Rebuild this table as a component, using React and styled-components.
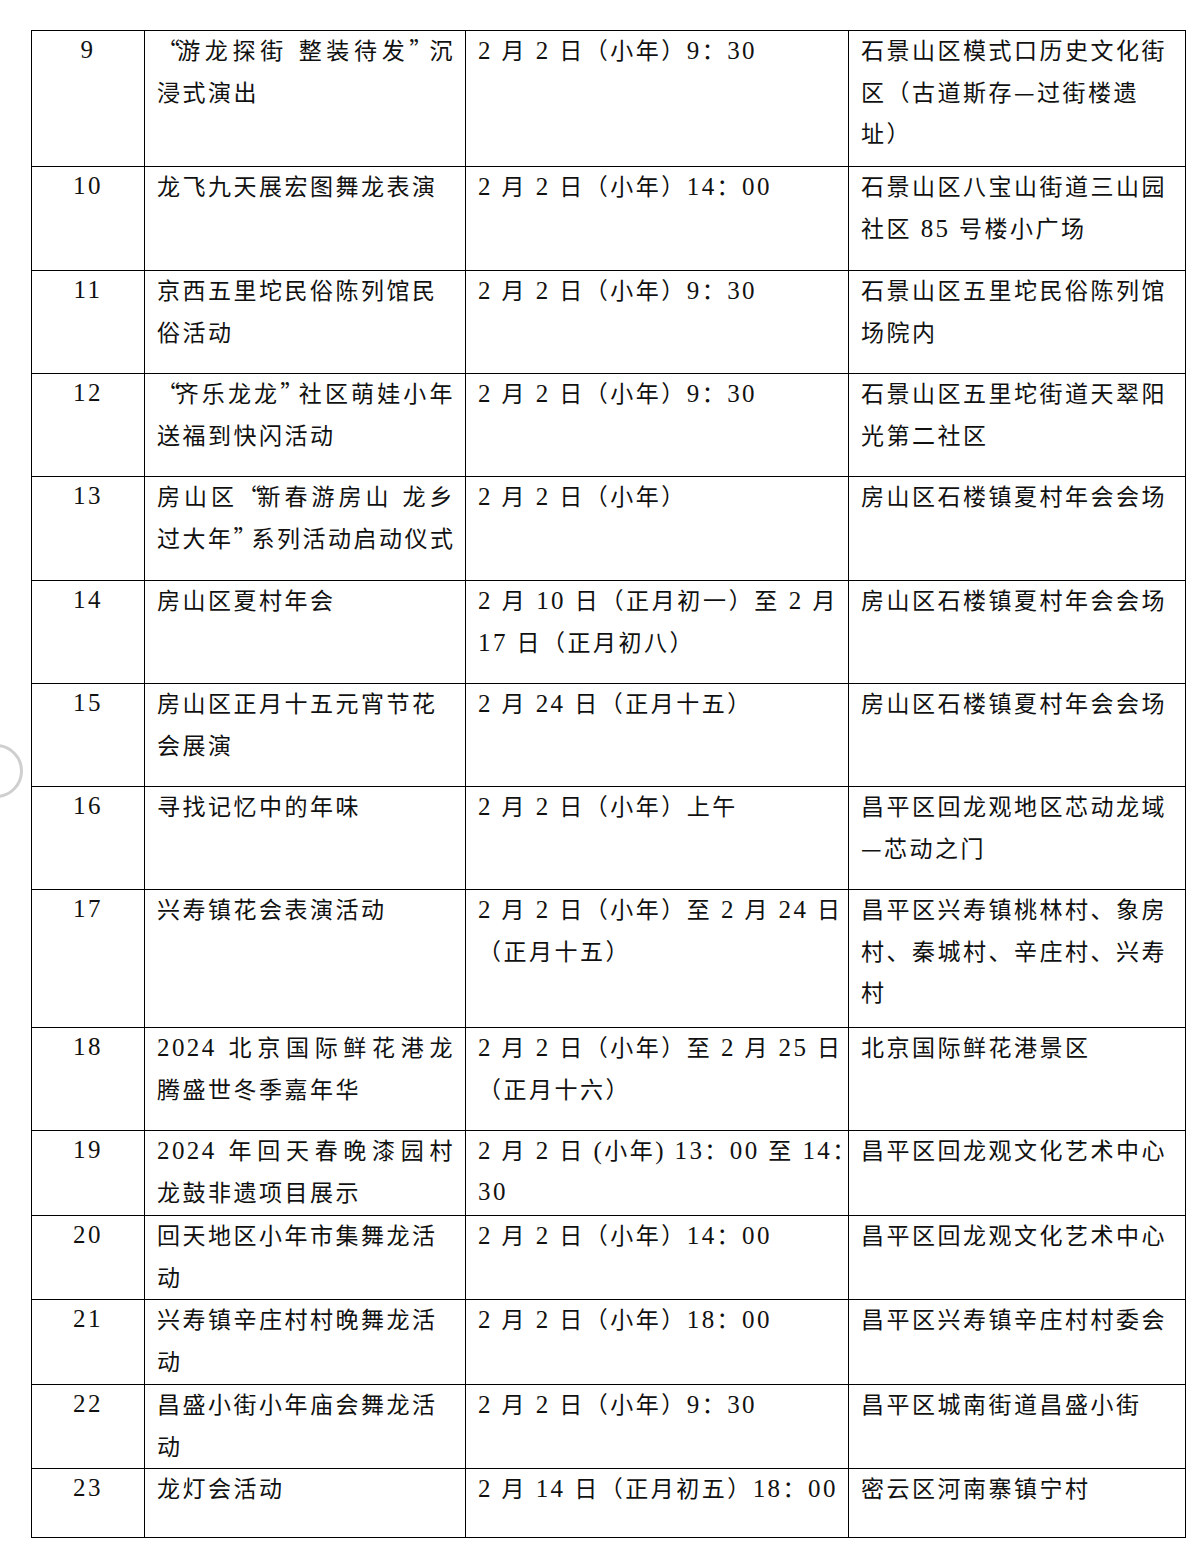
import styled, { createGlobalStyle } from "styled-components";

const GlobalStyle = createGlobalStyle`
  html, body {
    margin: 0;
    padding: 0;
    background: #ffffff;
  }
  body {
    font-family: "Liberation Serif", "Noto Sans CJK SC", serif;
    color: #111;
  }
`;

// each cell is a list of lines; a leading "|" marks a line spread to the full width
const rows = [
  { no: 9, h: 136, name: ["|“游龙探街 整装待发”沉", "浸式演出"], time: ["2 月 2 日（小年）9：30"], place: ["石景山区模式口历史文化街", "区（古道斯存—过街楼遗", "址）"] },
  { no: 10, h: 104, name: ["龙飞九天展宏图舞龙表演"], time: ["2 月 2 日（小年）14：00"], place: ["石景山区八宝山街道三山园", "社区 85 号楼小广场"] },
  { no: 11, h: 103, name: ["京西五里坨民俗陈列馆民", "俗活动"], time: ["2 月 2 日（小年）9：30"], place: ["石景山区五里坨民俗陈列馆", "场院内"] },
  { no: 12, h: 103, name: ["|“齐乐龙龙”社区萌娃小年", "送福到快闪活动"], time: ["2 月 2 日（小年）9：30"], place: ["石景山区五里坨街道天翠阳", "光第二社区"] },
  { no: 13, h: 104, name: ["|房山区“新春游房山 龙乡", "过大年”系列活动启动仪式"], time: ["2 月 2 日（小年）"], place: ["房山区石楼镇夏村年会会场"] },
  { no: 14, h: 103, name: ["房山区夏村年会"], time: ["|2 月 10 日（正月初一）至 2 月", "17 日（正月初八）"], place: ["房山区石楼镇夏村年会会场"] },
  { no: 15, h: 103, name: ["房山区正月十五元宵节花", "会展演"], time: ["2 月 24 日（正月十五）"], place: ["房山区石楼镇夏村年会会场"] },
  { no: 16, h: 103, name: ["寻找记忆中的年味"], time: ["2 月 2 日（小年）上午"], place: ["昌平区回龙观地区芯动龙域", "—芯动之门"] },
  { no: 17, h: 138, name: ["兴寿镇花会表演活动"], time: ["|2 月 2 日（小年）至 2 月 24 日", "（正月十五）"], place: ["昌平区兴寿镇桃林村、象房", "村、秦城村、辛庄村、兴寿", "村"] },
  { no: 18, h: 103, name: ["|2024 北京国际鲜花港龙", "腾盛世冬季嘉年华"], time: ["|2 月 2 日（小年）至 2 月 25 日", "（正月十六）"], place: ["北京国际鲜花港景区"] },
  { no: 19, h: 85, name: ["|2024 年回天春晚漆园村", "龙鼓非遗项目展示"], time: ["|2 月 2 日 (小年) 13：00 至 14：", "30"], place: ["昌平区回龙观文化艺术中心"] },
  { no: 20, h: 84, name: ["回天地区小年市集舞龙活", "动"], time: ["2 月 2 日（小年）14：00"], place: ["昌平区回龙观文化艺术中心"] },
  { no: 21, h: 85, name: ["兴寿镇辛庄村村晚舞龙活", "动"], time: ["2 月 2 日（小年）18：00"], place: ["昌平区兴寿镇辛庄村村委会"] },
  { no: 22, h: 84, name: ["昌盛小街小年庙会舞龙活", "动"], time: ["2 月 2 日（小年）9：30"], place: ["昌平区城南街道昌盛小街"] },
  { no: 23, h: 69, name: ["龙灯会活动"], time: ["2 月 14 日（正月初五）18：00"], place: ["密云区河南寨镇宁村"] },
];

const kindOf = (part) => {
  if (/^[\x20-\x7E]+$/.test(part)) return "latin";
  if (/^[“”]+$/.test(part)) return "quote";
  return "cjk";
};

// latin runs (digits, spaces, ascii brackets) get the serif face, the rest the CJK face
function Runs({ text }) {
  return text
    .split(/([\x20-\x7E]+|[“”])/)
    .filter(Boolean)
    .map((part, i) => (
      <Run key={i} $kind={kindOf(part)}>
        {part}
      </Run>
    ));
}

function CellLines({ lines }) {
  return lines.map((l, i) => {
    const full = l.startsWith("|");
    return (
      <Line key={i} $full={full}>
        <Runs text={full ? l.slice(1) : l} />
      </Line>
    );
  });
}

export default function App() {
  return (
    <Page>
      <GlobalStyle />
      <ScrollKnob />
      <Table>
        <colgroup>
          <col style={{ width: 113 }} />
          <col style={{ width: 321 }} />
          <col style={{ width: 383 }} />
          <col style={{ width: 337 }} />
        </colgroup>
        <tbody>
          {rows.map((r) => (
            <Row key={r.no} $h={r.h}>
              <NoCell>
                <Line>
                  <Run $kind="latin">{r.no}</Run>
                </Line>
              </NoCell>
              <Cell>
                <CellLines lines={r.name} />
              </Cell>
              <Cell>
                <CellLines lines={r.time} />
              </Cell>
              <Cell>
                <CellLines lines={r.place} />
              </Cell>
            </Row>
          ))}
        </tbody>
      </Table>
    </Page>
  );
}

const Page = styled.div`
  position: relative;
  width: 1199px;
  height: 1553px;
  box-sizing: border-box;
  padding: 30px 0 0 31px;
  background: #ffffff;
  overflow: hidden;
`;

const ScrollKnob = styled.div`
  position: absolute;
  left: -31px;
  top: 744px;
  width: 48px;
  height: 48px;
  border: 3px solid #cfcfcf;
  border-radius: 50%;
  background: #ffffff;
`;

const Table = styled.table`
  border-collapse: collapse;
  table-layout: fixed;
  width: 1155px;
`;

const Row = styled.tr`
  height: ${(p) => p.$h}px;
`;

const Cell = styled.td`
  border: 1px solid #000;
  vertical-align: top;
  padding: 0 10px 0 12px;
  font-size: 24px;
  line-height: 41.5px;
  & > div:first-child {
    margin-top: -2px;
  }
`;

const NoCell = styled(Cell)`
  text-align: center;
  padding: 0;
`;

const Line = styled.div`
  height: 41.5px;
  white-space: nowrap;
  text-align: ${(p) => (p.$full ? "justify" : "inherit")};
  text-align-last: ${(p) => (p.$full ? "justify" : "auto")};
  text-justify: inter-character;
`;

const fonts = {
  latin: '"Liberation Serif", serif',
  quote: '"Noto Sans CJK SC", sans-serif',
  cjk: '"Noto Sans CJK SC", sans-serif',
};

const Run = styled.span`
  font-family: ${(p) => fonts[p.$kind]};
  font-size: ${(p) => (p.$kind === "latin" ? "25px" : "23px")};
  letter-spacing: ${(p) =>
    p.$kind === "latin" ? "2.4px" : p.$kind === "quote" ? "-5px" : "2.5px"};
`;
